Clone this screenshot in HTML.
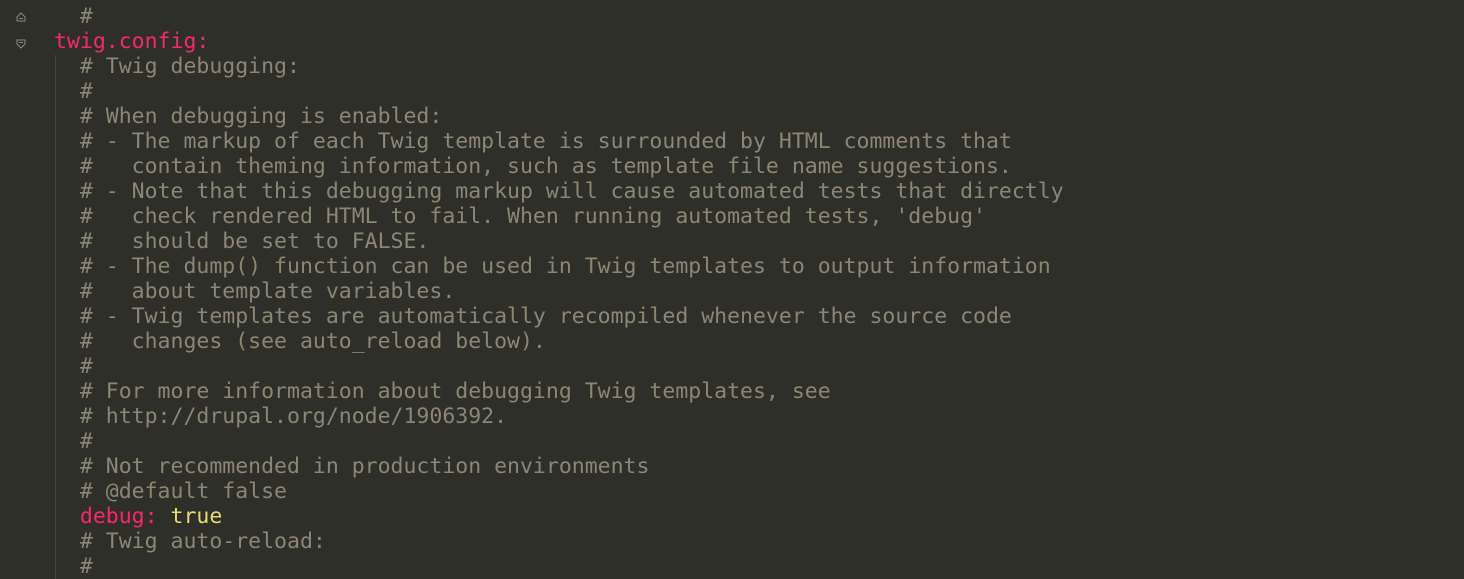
<!DOCTYPE html>
<html><head><style>
html,body{margin:0;padding:0;width:1464px;height:579px;overflow:hidden;background:#2f2f2a;}
.guide{position:absolute;left:55px;top:55px;width:1px;height:524px;background:#45453d;}
.code{position:absolute;left:54px;top:-21px;font-family:"DejaVu Sans Mono","Liberation Mono",monospace;font-size:21.5px;line-height:25px;color:#8c8672;white-space:pre;}
.k{color:#f92672}.t{color:#e6db74}
.ic{position:absolute;left:16px;width:10px;height:10px;}
</style></head><body>
<svg class="ic" style="top:12px" viewBox="0 0 10 10"><path d="M1 5 L5 1 L9 5 V9 H1 Z M3 6.5 H7" fill="none" stroke="#8a8a85" stroke-width="1"/></svg>
<svg class="ic" style="top:39px" viewBox="0 0 10 10"><path d="M1 1 H9 V5 L5 9 L1 5 Z M3 3.5 H7" fill="none" stroke="#8a8a85" stroke-width="1"/></svg>
<div class="guide"></div>
<div class="code">    
  #
<span class="k">twig.config:</span>
  # Twig debugging:
  #
  # When debugging is enabled:
  # - The markup of each Twig template is surrounded by HTML comments that
  #   contain theming information, such as template file name suggestions.
  # - Note that this debugging markup will cause automated tests that directly
  #   check rendered HTML to fail. When running automated tests, 'debug'
  #   should be set to FALSE.
  # - The dump() function can be used in Twig templates to output information
  #   about template variables.
  # - Twig templates are automatically recompiled whenever the source code
  #   changes (see auto_reload below).
  #
  # For more information about debugging Twig templates, see
  # http://drupal.org/node/1906392.
  #
  # Not recommended in production environments
  # @default false
  <span class="k">debug:</span> <span class="t">true</span>
  # Twig auto-reload:
  #</div>
</body></html>
